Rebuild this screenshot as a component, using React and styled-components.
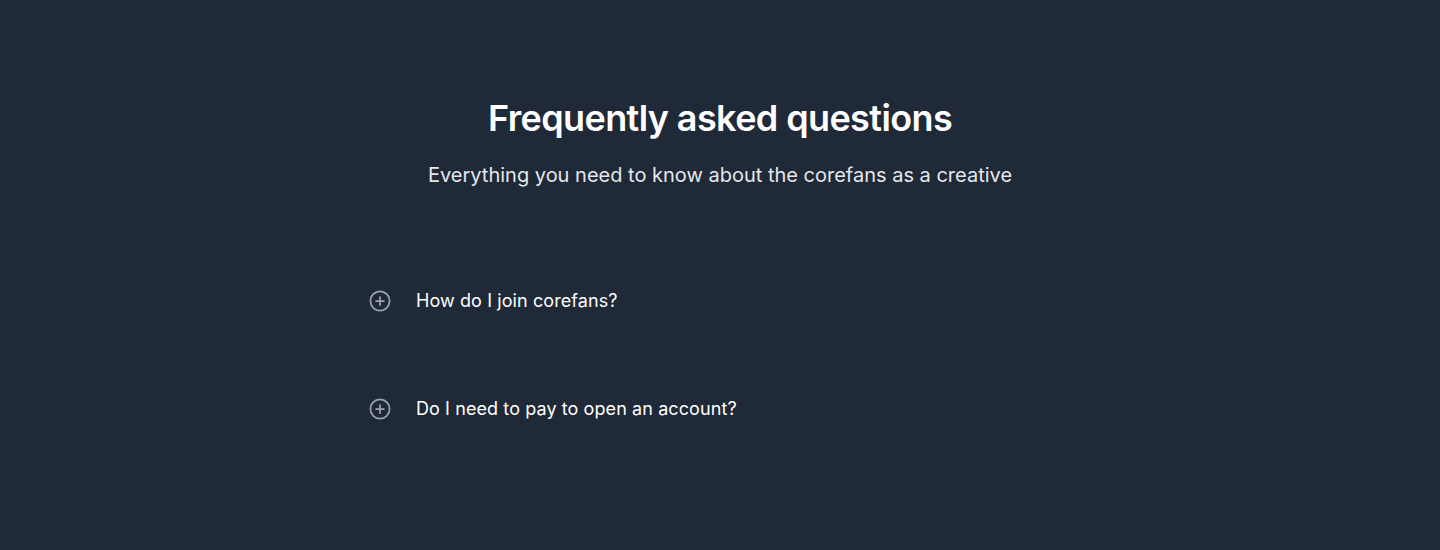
import React from "react";
import styled, { createGlobalStyle } from "styled-components";

const Global = createGlobalStyle`
  html, body { margin: 0; padding: 0; background: #1f2937; }
  body { font-family: Inter, "Noto Sans", sans-serif; -webkit-font-smoothing: antialiased; }
`;

const Section = styled.section`
  min-height: 550px;
  box-sizing: border-box;
  background: #1f2937;
  padding: 98px 32px 0;
  display: flex;
  flex-direction: column;
  align-items: center;
`;

const Header = styled.div`
  text-align: center;
`;

const Title = styled.h2`
  margin: 0;
  font-size: 36px;
  line-height: 40px;
  font-weight: 600;
  letter-spacing: -0.017em;
  color: #ffffff;
`;

const Subtitle = styled.p`
  margin: 23px 0 0;
  font-size: 20px;
  line-height: 28px;
  font-weight: 400;
  color: #e5e7eb;
`;

const List = styled.div`
  width: 704px;
  margin-top: 98px;
  display: flex;
  flex-direction: column;
  gap: 80px;
`;

const Item = styled.button`
  display: flex;
  align-items: center;
  gap: 24px;
  background: none;
  border: 0;
  padding: 0;
  text-align: left;
  cursor: pointer;
  font: inherit;
`;

const Icon = styled.span`
  display: flex;
  width: 24px;
  height: 24px;
  color: #9ca3af;
`;

const Question = styled.span`
  font-size: 18px;
  line-height: 28px;
  font-weight: 400;
  letter-spacing: 0.005em;
  color: #ffffff;
`;

const PlusCircle = () => (
  <svg width="24" height="24" viewBox="0 0 24 24" fill="none" stroke="currentColor" strokeWidth="1.75" strokeLinecap="round">
    <circle cx="12" cy="12" r="9.6" />
    <path d="M12 8v8M8 12h8" />
  </svg>
);

const faqs = ["How do I join corefans?", "Do I need to pay to open an account?"];

export default function App() {
  return (
    <>
      <Global />
      <Section>
        <Header>
          <Title>Frequently asked questions</Title>
          <Subtitle>Everything you need to know about the corefans as a creative</Subtitle>
        </Header>
        <List>
          {faqs.map((q) => (
            <Item key={q}>
              <Icon><PlusCircle /></Icon>
              <Question>{q}</Question>
            </Item>
          ))}
        </List>
      </Section>
    </>
  );
}
